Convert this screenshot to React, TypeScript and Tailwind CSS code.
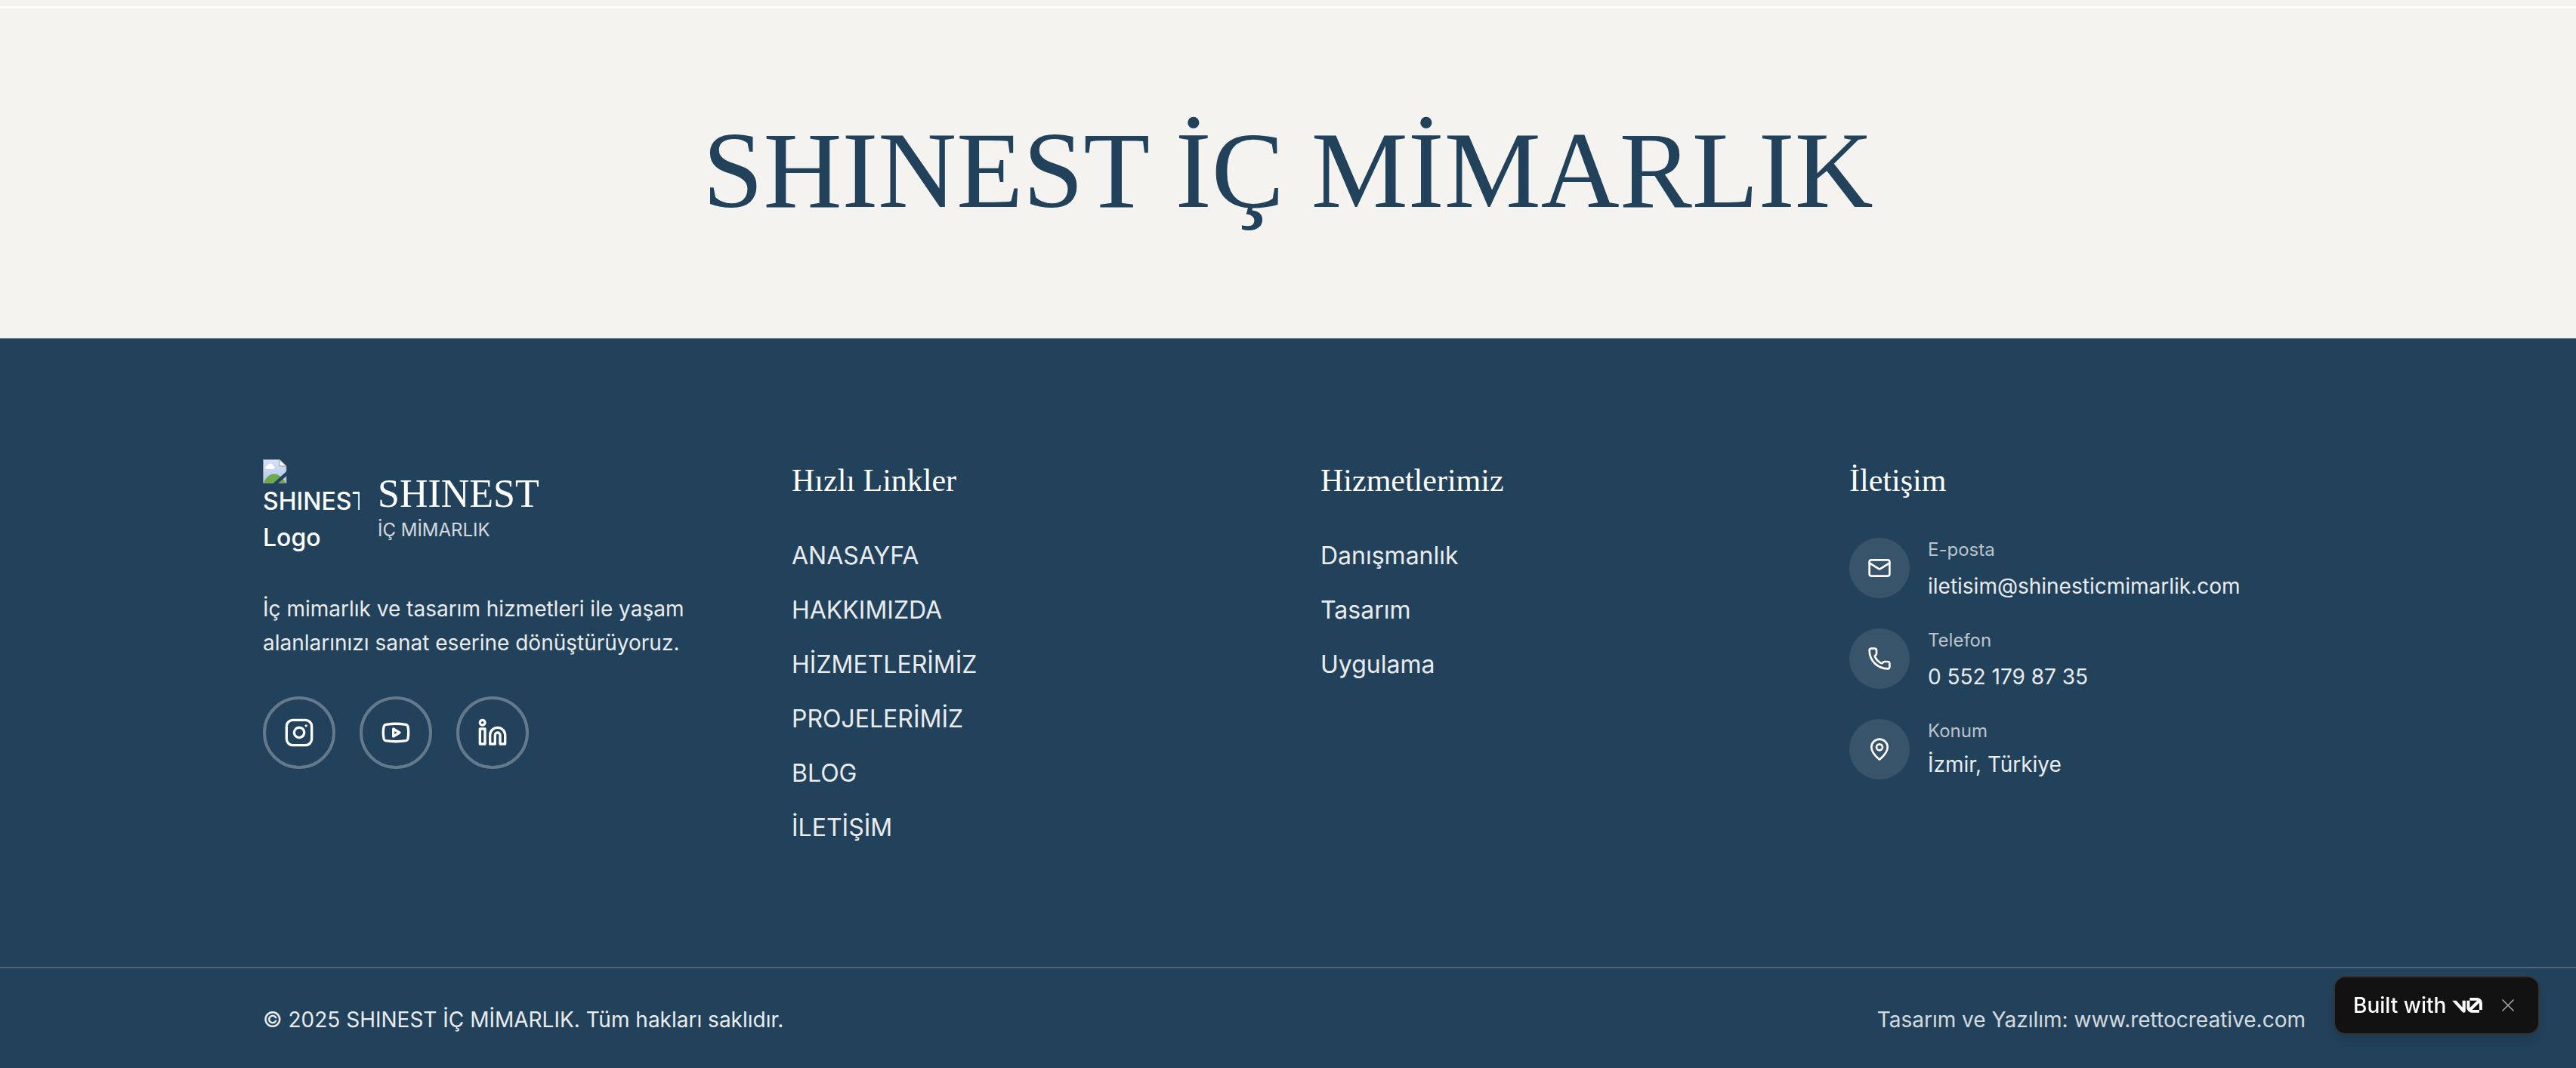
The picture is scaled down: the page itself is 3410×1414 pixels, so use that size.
import { Instagram, Youtube, Linkedin, Mail, Phone, MapPin, X } from "lucide-react";
import type { ReactNode } from "react";

const quickLinks = ["ANASAYFA", "HAKKIMIZDA", "HİZMETLERİMİZ", "PROJELERİMİZ", "BLOG", "İLETİŞİM"];
const services = ["Danışmanlık", "Tasarım", "Uygulama"];

function BrokenImage() {
  return (
    <svg viewBox="0 0 32 32" className="block size-8" aria-hidden="true">
      <defs>
        <linearGradient id="sky" x1="0" y1="0" x2="0" y2="1">
          <stop offset="0" stopColor="#d6e2fa" />
          <stop offset="1" stopColor="#b4c6ee" />
        </linearGradient>
      </defs>
      <path d="M.5.5h21.5l9 9v22H.5z" fill="url(#sky)" stroke="#959595" />
      <path d="M6 13c-3.500 0-3.500-4.500.5-4.700C7 5 13 4.500 13.500 8.800c3 .2 3 4.200 0 4.200z" fill="#fff" />
      <path d="M1 31C4 24 9 19.500 15 19.500S26 24 30 31z" fill="#6dab48" />
      <path d="M22 .5v8.500h9z" fill="#fff" stroke="#959595" />
      <path d="M32 15.500 13.500 32H20L32 21.500z" fill="#22415a" />
    </svg>
  );
}

function V0Logo() {
  return (
    <svg viewBox="0 0 40 20" className="h-5 w-10" fill="#fff" aria-label="v0" role="img">
      <path d="M23.392 0h9.527a6.995 6.995 0 0 1 6.995 6.995v9.085h-3.913V6.995c0-.093-.004-.186-.011-.277l-9.527 9.361.097.001h9.441v3.696h-9.441c-3.864 0-7.081-3.162-7.081-7.025V3.689h3.913v9.062c0 .174.013.347.040.516L33.168 3.700a3 3 0 0 0-.249-.011h-9.527V0Z" />
      <path d="M13.769 19.096 0 3.688h5.539l8.084 9.046V3.688h4.130v13.887c0 2.096-2.588 3.084-3.984 1.521Z" />
    </svg>
  );
}

function Social({ label, children }: { label: string; children: ReactNode }) {
  return (
    <a href="#" aria-label={label} className="flex size-24 items-center justify-center rounded-full border-4 border-white/30">
      {children}
    </a>
  );
}

function LinkColumn({ title, items }: { title: string; items: string[] }) {
  return (
    <nav aria-label={title}>
      <h3 className="mb-11 font-['Liberation_Serif',serif] text-[42px] leading-14">{title}</h3>
      <ul className="flex flex-col gap-4 text-[32px] leading-14 text-white/90">
        {items.map((item) => (
          <li key={item}>
            <a href="#">{item}</a>
          </li>
        ))}
      </ul>
    </nav>
  );
}

function Contact({ icon, label, children }: { icon: ReactNode; label: string; children: ReactNode }) {
  return (
    <div className="flex items-start gap-6">
      <span className="flex size-20 shrink-0 items-center justify-center rounded-full bg-white/10">{icon}</span>
      <div>
        <p className="mb-2 text-2xl leading-8 text-white/70">{label}</p>
        {children}
      </div>
    </div>
  );
}

export default function App() {
  return (
    <div className="bg-[#22415a] font-['Inter',sans-serif] text-white">
      <div className="h-2 bg-[#f4f3ef]" />
      <div className="h-[3px] bg-white" />
      <section className="flex h-[437px] items-center justify-center bg-[#f4f3ef] pb-2">
        <h2 className="font-['Liberation_Serif',serif] text-[144px] leading-none whitespace-nowrap text-[#22415a]">SHINEST İÇ MİMARLIK</h2>
      </section>

      <footer>
        <div className="pr-2.5">
          <div className="mx-auto grid max-w-[2800px] grid-cols-4 gap-x-24 px-12 pt-40 pb-39">
            <div>
              <div className="flex items-center gap-6">
                <div className="size-32 shrink-0 overflow-hidden text-[32px] leading-12 font-medium">
                  <BrokenImage />
                  SHINEST Logo
                </div>
                <div>
                  <p className="font-['Liberation_Serif',serif] text-[52px] leading-14">SHINEST</p>
                  <p className="mt-1 text-2xl leading-8 text-white/80">İÇ MİMARLIK</p>
                </div>
              </div>
              <p className="mt-12 text-[28px] leading-[45px] text-white/90">
                İç mimarlık ve tasarım hizmetleri ile yaşam alanlarınızı sanat eserine dönüştürüyoruz.
              </p>
              <div className="mt-12 flex gap-8">
                <Social label="Instagram"><Instagram className="size-10" /></Social>
                <Social label="YouTube"><Youtube className="size-10" /></Social>
                <Social label="LinkedIn"><Linkedin className="size-10" /></Social>
              </div>
            </div>

            <LinkColumn title="Hızlı Linkler" items={quickLinks} />
            <LinkColumn title="Hizmetlerimiz" items={services} />

            <div>
              <h3 className="mb-12 font-['Liberation_Serif',serif] text-[42px] leading-14">İletişim</h3>
              <address className="flex flex-col gap-8 text-[28px] text-white not-italic">
                <Contact icon={<Mail className="size-8" />} label="E-posta">
                  <a href="mailto:iletisim@shinesticmimarlik.com" className="block leading-12 text-white/90">iletisim@shinesticmimarlik.com</a>
                </Contact>
                <Contact icon={<Phone className="size-8" />} label="Telefon">
                  <a href="tel:+905521798735" className="block leading-12 text-white/90">0 552 179 87 35</a>
                </Contact>
                <Contact icon={<MapPin className="size-8" />} label="Konum">
                  <p className="leading-10 text-white/90">İzmir, Türkiye</p>
                </Contact>
              </address>
            </div>
          </div>
        </div>

        <div className="border-t-2 border-white/20 pr-2.5">
          <div className="mx-auto flex max-w-[2800px] justify-between px-12 pt-12 pb-11 text-[28px] leading-10">
            <p className="text-white/90">© 2025 SHINEST İÇ MİMARLIK. Tüm hakları saklıdır.</p>
            <a href="#" className="text-white/80">Tasarım ve Yazılım: www.rettocreative.com</a>
          </div>
        </div>
      </footer>

      <div className="fixed right-12 bottom-11 flex h-[78px] w-[273px] items-center rounded-2xl border-2 border-[#333] bg-[#121212] pl-6 text-[28px] font-medium shadow-lg">
        <a href="#" className="flex items-center gap-2 whitespace-nowrap">Built with <V0Logo /></a>
        <button type="button" aria-label="Kapat" className="ml-5 text-[#a1a1a1]"><X className="size-7" strokeWidth={1.5} /></button>
      </div>
    </div>
  );
}
